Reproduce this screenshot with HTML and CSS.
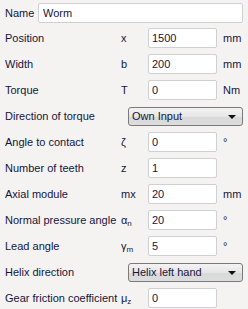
FILE: index.html
```html
<!DOCTYPE html>
<html lang="en">
    <head>
        <meta charset="UTF-8">
        <link rel="stylesheet" href="styles.css">
        <title>Worm</title>
    </head>
    <body>
        <div class="name-row">
            <span class="label">Name</span>
            <input class="field name-field" value="Worm">
        </div>
        <div class="props">
            <span class="label">Position</span><span class="sym">x</span><input class="field" value="1500"><span class="unit">mm</span>
            <span class="label">Width</span><span class="sym">b</span><input class="field" value="200"><span class="unit">mm</span>
            <span class="label">Torque</span><span class="sym">T</span><input class="field" value="0"><span class="unit">Nm</span>
            <span class="label">Direction of torque</span><div class="combo">Own Input<span class="arrow"></span></div>
            <span class="label">Angle to contact</span><span class="sym">ζ</span><input class="field" value="0"><span class="unit">°</span>
            <span class="label">Number of teeth</span><span class="sym">z</span><input class="field" value="1"><span class="unit"></span>
            <span class="label">Axial module</span><span class="sym">mx</span><input class="field" value="20"><span class="unit">mm</span>
            <span class="label">Normal pressure angle</span><span class="sym">α<sub>n</sub></span><input class="field" value="20"><span class="unit">°</span>
            <span class="label">Lead angle</span><span class="sym">γ<sub>m</sub></span><input class="field" value="5"><span class="unit">°</span>
            <span class="label">Helix direction</span><div class="combo">Helix left hand<span class="arrow"></span></div>
            <span class="label">Gear friction coefficient</span><span class="sym">μ<sub>z</sub></span><input class="field" value="0"><span class="unit"></span>
        </div>
    </body>
</html>
```

FILE: styles.css
```css
body, html {
    margin: 0;
    width: 100%;
    height: 100%;
    background-color: #f4f3f2;
}
body {
    font-family: "Liberation Sans", Arial, sans-serif;
    font-size: 11px;
    color: #15153d;
    padding: 0 5px;
    box-sizing: border-box;
}
.name-row {
    display: flex;
    align-items: center;
    height: 25px;
}
.name-row .label {
    width: 33px;
}
.field {
    font: inherit;
    color: #15153d;
    height: 20px;
    box-sizing: border-box;
    border: 1px solid #cfcfd6;
    border-radius: 2px;
    background: #fff;
    padding: 0 3px;
    margin: 0;
    width: 69px;
    outline: none;
}
.name-field {
    flex: 1;
    width: auto;
    padding-left: 4px;
}
.props {
    display: grid;
    grid-template-columns: 116px 27px 69px 1fr;
    grid-auto-rows: 26px;
    align-items: center;
}
.sym sub {
    font-size: 8px;
    vertical-align: -2px;
    line-height: 0;
}
.unit {
    padding-left: 6px;
}
.combo {
    grid-column: 2 / span 3;
    margin-left: 7px;
    height: 19px;
    box-sizing: border-box;
    border: 1px solid #7a7a7a;
    border-radius: 3px;
    background: linear-gradient(#f3f3f3, #e6e6e6 50%, #d9d9d9 51%, #dddddd);
    display: flex;
    align-items: center;
    padding-left: 3px;
    position: relative;
}
.arrow {
    position: absolute;
    right: 6px;
    top: 7px;
    width: 0;
    height: 0;
    border-left: 4px solid transparent;
    border-right: 4px solid transparent;
    border-top: 4px solid #111;
}
```
